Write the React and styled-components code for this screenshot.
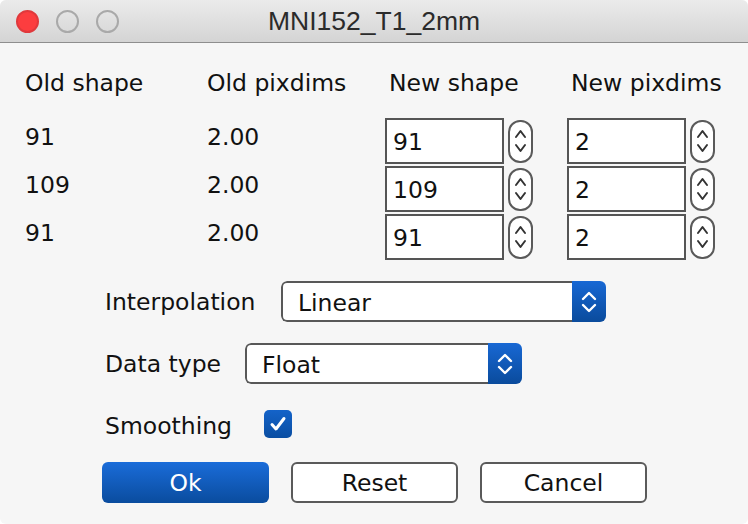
import React from 'react';
import styled, { createGlobalStyle } from 'styled-components';

const Global = createGlobalStyle`
  html, body {
    margin: 0;
    background: #ffffff;
  }
  * {
    box-sizing: border-box;
  }
`;

const Window = styled.div`
  width: 748px;
  height: 524px;
  border-radius: 6px;
  overflow: hidden;
  background: #f6f6f6;
  font-family: "DejaVu Sans", Verdana, sans-serif;
  font-size: 23.5px;
  color: #111;
  display: flex;
  flex-direction: column;
`;

const TitleBar = styled.div`
  height: 43px;
  flex: none;
  display: flex;
  align-items: center;
  position: relative;
  padding-left: 16px;
  background: linear-gradient(#ebebeb, #d4d4d4);
  border-bottom: 1px solid #8e8e8e;
`;

const Lights = styled.div`
  display: flex;
  gap: 17px;
`;

const Light = styled.span`
  width: 23px;
  height: 23px;
  border-radius: 50%;
  background: ${p => (p.$close ? '#fc3d3f' : 'transparent')};
  border: 2px solid ${p => (p.$close ? '#e0393c' : '#a9a9a9')};
`;

const Title = styled.div`
  position: absolute;
  left: 0;
  right: 0;
  top: 0;
  bottom: 0;
  display: flex;
  align-items: center;
  justify-content: center;
  font-family: "Liberation Sans", Arial, sans-serif;
  font-size: 26.5px;
  color: #2b2b2b;
  pointer-events: none;
`;

const Table = styled.div`
  display: grid;
  grid-template-columns: 182px 178px 182px 1fr;
  grid-auto-rows: 48px;
  grid-template-rows: 74px;
  margin-left: 25px;
`;

const Head = styled.div`
  padding-top: 27px;
  line-height: 26px;
  padding-left: ${p => (p.$inset ? '4px' : '0')};
  white-space: nowrap;
`;

const OldCell = styled.div`
  display: flex;
  align-items: center;
  padding-bottom: 8px;
`;

const SpinCell = styled.div`
  display: flex;
  align-items: center;
  gap: 4px;
`;

const Field = styled.div`
  width: 119px;
  height: 46px;
  border: 2px solid #555;
  background: #fff;
  display: flex;
  align-items: center;
  padding-left: 6px;
  padding-top: 2px;
`;

const Stepper = styled.div`
  width: 25px;
  height: 43px;
  border: 2px solid #5a5a5a;
  border-radius: 12px;
  background: #fff;
  display: flex;
  align-items: center;
  justify-content: center;
`;

const Form = styled.div`
  display: flex;
  flex-direction: column;
  padding-left: 105px;
  margin-top: 20px;
`;

const FormRow = styled.div`
  display: flex;
  align-items: center;
  height: ${p => p.$h || 41}px;
  margin-bottom: ${p => p.$mb || 0}px;
`;

const Label = styled.div`
  width: ${p => p.$w}px;
  flex: none;
  white-space: nowrap;
`;

const Select = styled.div`
  width: ${p => p.$w}px;
  height: 41px;
  display: flex;
  border-radius: 6px;
  overflow: hidden;
`;

const SelectValue = styled.div`
  flex: 1;
  background: #fff;
  border: 2px solid #585858;
  border-right: none;
  border-radius: 6px 0 0 6px;
  display: flex;
  align-items: center;
  padding-left: 15px;
  padding-top: 2px;
`;

const SelectArrow = styled.div`
  width: 34px;
  background: linear-gradient(#1868d4, #0a4b9c);
  display: flex;
  align-items: center;
  justify-content: center;
`;

const Check = styled.div`
  width: 28px;
  height: 28px;
  border-radius: 5px;
  margin-top: -4px;
  background: linear-gradient(#1463c9, #0a4ea2);
  display: flex;
  align-items: center;
  justify-content: center;
`;

const Buttons = styled.div`
  display: flex;
  gap: 22px;
  padding-left: 102px;
  margin-top: 16px;
`;

const Button = styled.div`
  width: 167px;
  height: 41px;
  border-radius: 6px;
  display: flex;
  align-items: center;
  justify-content: center;
  padding-top: 1px;
  background: ${p => (p.$primary ? 'linear-gradient(#1a6cd9, #0a4c9e)' : '#fff')};
  color: ${p => (p.$primary ? '#fff' : '#111')};
  border: ${p => (p.$primary ? 'none' : '2px solid #5a5a5a')};
`;

const Chevrons = ({ color = '#333', w = 10, gap = 10, sw = 2 }) => (
  <svg width={w + 4} height={gap + 14} viewBox={`0 0 ${w + 4} ${gap + 14}`}>
    <polyline
      points={`2,8 ${w / 2 + 2},2 ${w + 2},8`}
      fill="none"
      stroke={color}
      strokeWidth={sw}
      strokeLinecap="round"
      strokeLinejoin="round"
    />
    <polyline
      points={`2,${gap + 6} ${w / 2 + 2},${gap + 12} ${w + 2},${gap + 6}`}
      fill="none"
      stroke={color}
      strokeWidth={sw}
      strokeLinecap="round"
      strokeLinejoin="round"
    />
  </svg>
);

const rows = [
  { shape: '91', pix: '2.00', nshape: '91', npix: '2' },
  { shape: '109', pix: '2.00', nshape: '109', npix: '2' },
  { shape: '91', pix: '2.00', nshape: '91', npix: '2' },
];

const Spin = ({ value }) => (
  <SpinCell>
    <Field>{value}</Field>
    <Stepper>
      <Chevrons w={9} gap={10} sw={2} />
    </Stepper>
  </SpinCell>
);

const App = () => {
  return (
    <Window>
      <Global />
      <TitleBar>
        <Lights>
          <Light $close />
          <Light />
          <Light />
        </Lights>
        <Title>MNI152_T1_2mm</Title>
      </TitleBar>
      <Table>
        <Head>Old shape</Head>
        <Head>Old pixdims</Head>
        <Head $inset>New shape</Head>
        <Head $inset>New pixdims</Head>
        {rows.map((r, i) => (
          <React.Fragment key={i}>
            <OldCell>{r.shape}</OldCell>
            <OldCell>{r.pix}</OldCell>
            <Spin value={r.nshape} />
            <Spin value={r.npix} />
          </React.Fragment>
        ))}
      </Table>
      <Form>
        <FormRow $mb={21}>
          <Label $w={176}>Interpolation</Label>
          <Select $w={325}>
            <SelectValue>Linear</SelectValue>
            <SelectArrow>
              <Chevrons color="#fff" w={12} gap={8} sw={2.4} />
            </SelectArrow>
          </Select>
        </FormRow>
        <FormRow $mb={21}>
          <Label $w={140}>Data type</Label>
          <Select $w={277}>
            <SelectValue>Float</SelectValue>
            <SelectArrow>
              <Chevrons color="#fff" w={12} gap={8} sw={2.4} />
            </SelectArrow>
          </Select>
        </FormRow>
        <FormRow $h={41}>
          <Label $w={159}>Smoothing</Label>
          <Check>
            <svg width="18" height="16" viewBox="0 0 18 16">
              <polyline
                points="3,8.5 7,13 15,2.5"
                fill="none"
                stroke="#fff"
                strokeWidth="3"
                strokeLinecap="round"
                strokeLinejoin="round"
              />
            </svg>
          </Check>
        </FormRow>
      </Form>
      <Buttons>
        <Button $primary>Ok</Button>
        <Button>Reset</Button>
        <Button>Cancel</Button>
      </Buttons>
    </Window>
  );
};

export default App;
